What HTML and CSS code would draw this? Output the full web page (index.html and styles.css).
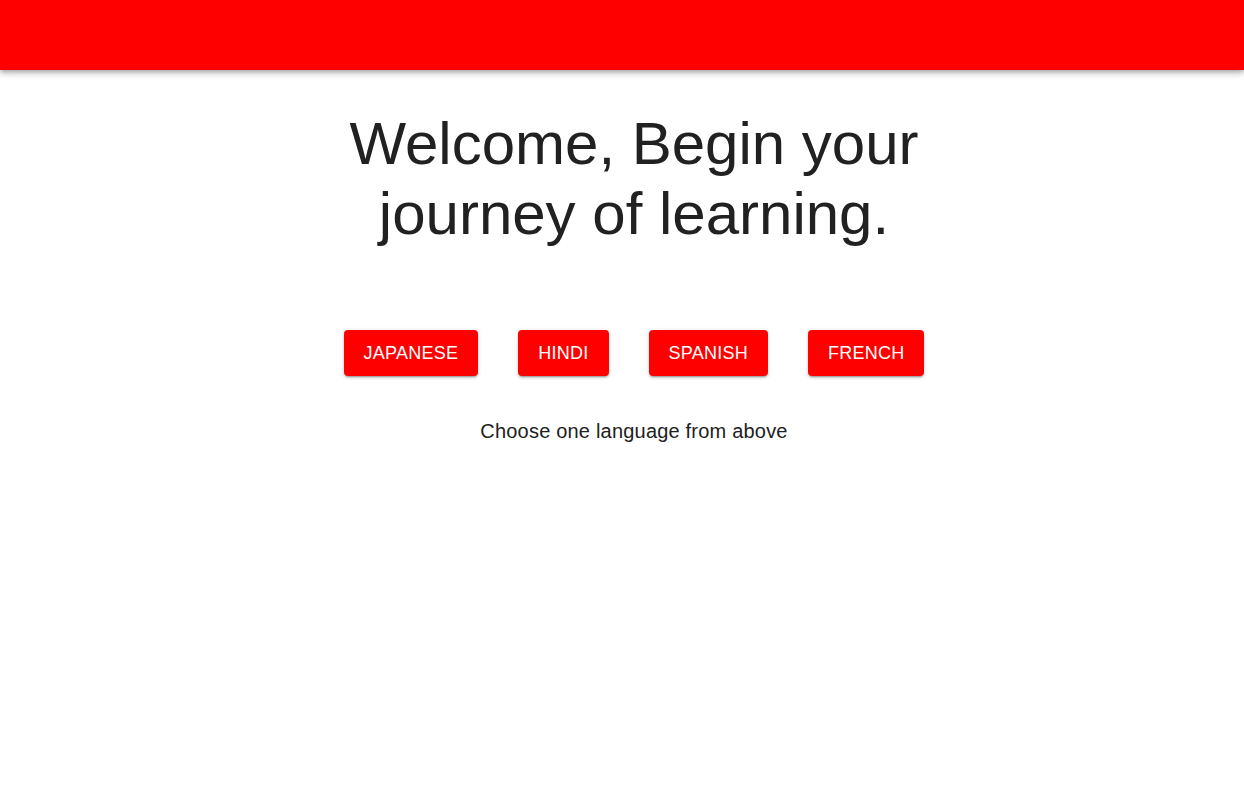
FILE: index.html
```html
<!DOCTYPE html>
<html lang="en">
<head>
<meta charset="utf-8">
<title>Learn Languages</title>
<link rel="stylesheet" href="styles.css">
</head>
<body>
<header class="appbar"></header>
<main class="content">
  <h1 class="title">Welcome, Begin your journey of learning.</h1>
  <div class="buttons">
    <button class="btn">Japanese</button>
    <button class="btn">Hindi</button>
    <button class="btn">Spanish</button>
    <button class="btn">French</button>
  </div>
  <p class="hint">Choose one language from above</p>
</main>
</body>
</html>
```
FILE: styles.css
```css
html, body {
  margin: 0;
  padding: 0;
  background: #fff;
  font-family: "Liberation Sans", Arial, sans-serif;
  color: #212121;
}
.appbar {
  height: 70px;
  background: #ff0000;
  box-shadow: 0 2px 4px -1px rgba(0,0,0,0.2), 0 4px 5px 0 rgba(0,0,0,0.14), 0 1px 10px 0 rgba(0,0,0,0.12);
  position: relative;
  z-index: 1;
}
.content {
  display: flex;
  flex-direction: column;
  align-items: center;
  padding-left: 24px;
}
.title {
  margin: 39px 0 0;
  max-width: 600px;
  font-size: 60px;
  line-height: 70px;
  font-weight: 400;
  text-align: center;
  color: #212121;
}
.buttons {
  display: flex;
  gap: 40px;
  margin-top: 81px;
}
.btn {
  height: 46px;
  padding: 0 20px;
  border: none;
  border-radius: 4px;
  background: #ff0000;
  color: #fff;
  font-family: "Liberation Sans", Arial, sans-serif;
  font-size: 18px;
  letter-spacing: 0.25px;
  text-transform: uppercase;
  box-shadow: 0 3px 1px -2px rgba(0,0,0,0.2), 0 2px 2px 0 rgba(0,0,0,0.14), 0 1px 5px 0 rgba(0,0,0,0.12);
  cursor: pointer;
}
.hint {
  margin: 43px 0 0;
  font-size: 20px;
  line-height: 24px;
  letter-spacing: 0.2px;
  color: #212121;
}
```
